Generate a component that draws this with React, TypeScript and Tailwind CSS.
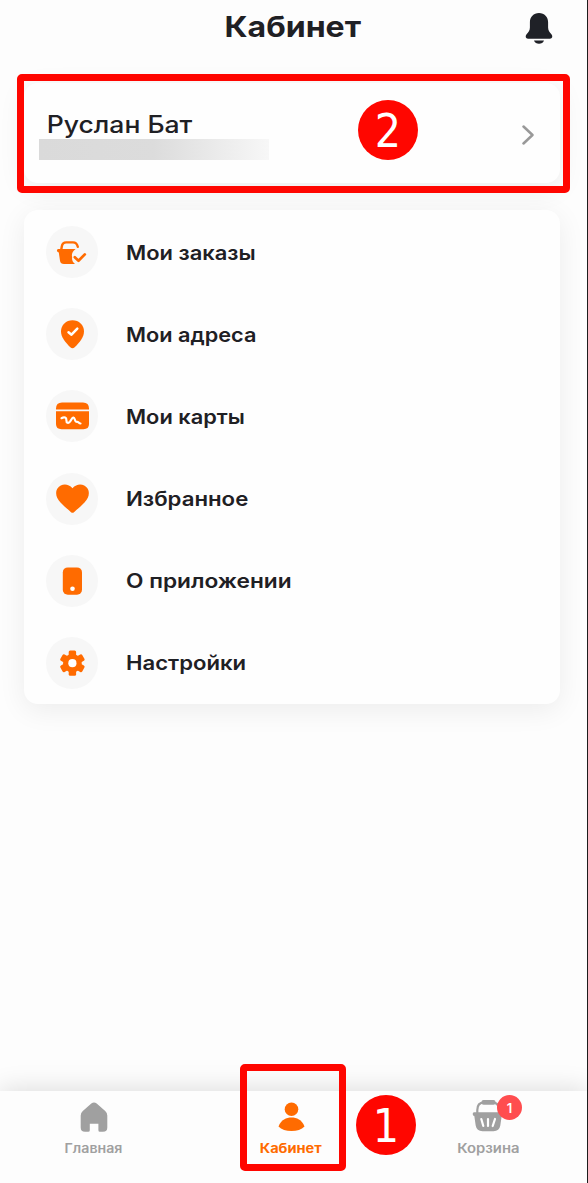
import type { ReactNode } from 'react'

const ORANGE = '#ff6b00'

function BellIcon() {
  return (
    <svg width="28" height="34" viewBox="0 0 28 34" fill="#1f2127">
      <path d="M14 1C8.600 1 4.900 5 4.900 10.200V15.500C4.900 18.600 3.400 20.400 1.600 22.300C0 24.200 .7 26.700 3 26.700H25C27.300 26.700 28 24.200 26.400 22.300C24.600 20.400 23.100 18.600 23.100 15.500V10.200C23.100 5 19.400 1 14 1Z" />
      <path d="M9 28.500H19C18.200 30.900 16.300 31.800 14 31.800S9.800 30.900 9 28.500Z" />
    </svg>
  )
}

function OrdersIcon() {
  return (
    <svg width="52" height="52" viewBox="0 0 52 52" fill="none">
      <path
        d="M15.200 24L15.800 20.500Q16.500 16.400 20.200 16.400H27Q30.700 16.400 31.800 20.800"
        stroke={ORANGE}
        strokeWidth="2.400"
        strokeLinecap="round"
      />
      <path
        d="M12.200 22.900H29.600C26.400 25.400 25.300 28.500 26.200 31.200C25.600 33.600 26.700 36.200 29 38H18Q14.500 38 14 34.700L12.800 26.500Q10.900 26.200 10.900 24.500Q10.900 22.900 12.200 22.900Z"
        fill={ORANGE}
      />
      <path
        d="M28.800 31.300L32.500 34.800L38.800 28.400"
        stroke={ORANGE}
        strokeWidth="2.700"
        strokeLinecap="round"
        strokeLinejoin="round"
      />
    </svg>
  )
}

function AddressIcon() {
  return (
    <svg width="52" height="52" viewBox="0 0 52 52" fill="none">
      <path
        d="M26.500 12.200C20.100 12.200 15 17 15 23.300C15 29.600 19.500 34.500 24.300 39.200Q26.500 41.200 28.700 39.200C33.500 34.500 38 29.600 38 23.300C38 17 32.900 12.200 26.500 12.200Z"
        fill={ORANGE}
      />
      <path
        d="M22.500 24.300L25.500 26.700L31.300 20.600"
        stroke="white"
        strokeWidth="2.500"
        strokeLinecap="round"
        strokeLinejoin="round"
      />
    </svg>
  )
}

function CardsIcon() {
  return (
    <svg width="52" height="52" viewBox="0 0 52 52" fill="none">
      <path d="M10 19.400V18.500Q10 12.400 16 12.400H37Q43 12.400 43 18.500V19.400Z" fill={ORANGE} />
      <path d="M10 21.300H43V34Q43 39.200 37.500 39.200H15.500Q10 39.200 10 34Z" fill={ORANGE} />
      <path
        d="M15.500 28.200C18.500 26.500 20.500 27.600 20.400 30.200C20.300 33 22.300 33.600 24 31.600C25.300 30 26 27.800 27.300 27.500C29.200 27.200 28.400 32.300 30.600 31.800C32.600 31.300 32.500 33.500 34.500 33.500"
        stroke="white"
        strokeWidth="2.200"
        strokeLinecap="round"
        strokeLinejoin="round"
      />
    </svg>
  )
}

function HeartIcon() {
  return (
    <svg width="52" height="52" viewBox="0 0 52 52" fill={ORANGE}>
      <path d="M26.500 15.200C31 10 38.200 10.600 41.400 15.300C44.300 19.700 42.600 25.200 38.500 29.400C35 33 31.500 36.100 28 39.200Q26.500 40.500 25 39.200C21.500 36.100 18 33 14.500 29.400C10.400 25.200 8.700 19.700 11.600 15.300C14.800 10.600 22 10 26.500 15.200Z" />
    </svg>
  )
}

function PhoneIcon() {
  return (
    <svg width="52" height="52" viewBox="0 0 52 52">
      <rect x="16.800" y="12.400" width="19.200" height="27.300" rx="5" fill={ORANGE} />
      <circle cx="26.500" cy="33.800" r="2.300" fill="white" />
    </svg>
  )
}

function SettingsIcon() {
  return (
    <svg width="52" height="52" viewBox="0 0 52 52">
      <g fill={ORANGE}>
        <circle cx="26.400" cy="26.200" r="9.300" />
        {[0, 60, 120].map((angle) => (
          <rect
            key={angle}
            x="22.700"
            y="13.600"
            width="7.400"
            height="25.200"
            rx="1.500"
            transform={`rotate(${angle} 26.400 26.200)`}
          />
        ))}
      </g>
      <circle cx="26.400" cy="26.200" r="4.100" fill="white" />
    </svg>
  )
}

function HomeIcon() {
  return (
    <svg width="28" height="30" viewBox="0 0 28 30" fill="#a0a0a0">
      <path d="M2.800 9L11.300 1.600Q14 -.4 16.700 1.600L25.200 9Q27.300 10.800 27.300 13.500V25.500Q27.300 29.800 23 29.800H20Q18.400 29.800 18.400 28.200V21.700H9.800V28.200Q9.800 29.800 8.200 29.800H5Q.7 29.800 .7 25.500V13.500Q.7 10.800 2.800 9Z" />
    </svg>
  )
}

function UserIcon() {
  return (
    <svg width="28" height="30" viewBox="0 0 28 30" fill={ORANGE}>
      <circle cx="14.500" cy="7.200" r="6.800" />
      <path d="M1.500 24.500C4.200 17.700 9.300 15.600 14.500 15.600S24.800 17.700 27.500 24.500C24.500 27.500 20 29 14.500 29S4.500 27.500 1.500 24.500Z" />
    </svg>
  )
}

function BasketIcon() {
  return (
    <svg width="32" height="33" viewBox="0 0 32 33" fill="none">
      <path
        d="M5.300 15V11Q5.300 3.500 12 3.300H20.500Q27 3.500 27 11V15"
        stroke="#a0a0a0"
        strokeWidth="2.200"
      />
      <rect x="9.500" y="1" width="14" height="4.800" rx="2" fill="#a0a0a0" />
      <path
        d="M2 13.200H30Q31.300 13.200 31.300 15Q31.300 17 29.700 17L28.300 26.500Q27.300 32.200 21.500 32.200H10.500Q4.700 32.200 3.700 26.500L2.300 17Q.7 17 .7 15Q.7 13.200 2 13.200Z"
        fill="#a0a0a0"
      />
      <path
        d="M9.300 20L11.300 27M16 20V27M23 20L20.700 27"
        stroke="white"
        strokeWidth="2.200"
        strokeLinecap="round"
      />
    </svg>
  )
}

interface MenuItem {
  label: string
  icon: ReactNode
  stretch: string
}

const MENU: MenuItem[] = [
  { label: 'Мои заказы', icon: <OrdersIcon />, stretch: 'scale-x-[1.095]' },
  { label: 'Мои адреса', icon: <AddressIcon />, stretch: 'scale-x-[1.085]' },
  { label: 'Мои карты', icon: <CardsIcon />, stretch: 'scale-x-[1.09]' },
  { label: 'Избранное', icon: <HeartIcon />, stretch: 'scale-x-[1.11]' },
  { label: 'О приложении', icon: <PhoneIcon />, stretch: 'scale-x-[1.135]' },
  { label: 'Настройки', icon: <SettingsIcon />, stretch: 'scale-x-[1.105]' },
]

function MenuRow({ label, icon, stretch }: MenuItem) {
  return (
    <li className="flex flex-1 items-center gap-7 pl-[22px]">
      <span className="size-[52px] shrink-0 rounded-full bg-[#f7f7f7]">{icon}</span>
      <span
        className={`origin-left pt-px text-[20px] leading-6 font-semibold whitespace-nowrap ${stretch}`}
      >
        {label}
      </span>
    </li>
  )
}

function StepMarker({ step, className }: { step: number; className: string }) {
  return (
    <div
      className={`absolute flex size-[60px] items-center justify-center rounded-full bg-[#ff0600] pt-0.5 font-['DejaVu_Sans_Condensed','DejaVu_Sans',sans-serif] text-[46px] leading-none text-white ${className}`}
    >
      {step}
    </div>
  )
}

export default function App() {
  return (
    <div className="relative flex h-[1183px] w-[588px] flex-col overflow-hidden border-r border-[#1d1d1d] bg-[#fdfdfd] font-[Inter,sans-serif] text-[#1f2024]">
      <header className="grid h-[83px] shrink-0 grid-cols-[1fr_auto_1fr] items-start pr-[35px] pl-[33px]">
        <h1 className="col-start-2 mt-[9px] scale-x-[1.105] text-[29px] leading-9 font-bold whitespace-nowrap">
          Кабинет
        </h1>
        <div className="mt-3 -mr-px justify-self-end">
          <BellIcon />
        </div>
      </header>

      <section className="mr-[27px] ml-6 flex h-[100px] shrink-0 items-center justify-between rounded-[14px] bg-[#fefefe] shadow-[0_6px_28px_rgba(0,0,0,0.07)]">
        <div className="mt-1 pl-[15px]">
          <p className="origin-left scale-x-[1.105] pl-[7px] text-[24px] leading-[29px] font-medium whitespace-nowrap">
            Руслан Бат
          </p>
          <div className="h-[21px] w-[230px] bg-linear-to-r from-[#dadada] via-[#dcdcdc] via-50% to-[#f7f7f7]" />
        </div>
        <svg width="12" height="20" viewBox="0 0 12 20" fill="none" className="mt-[3px] mr-[26px]">
          <path
            d="M1.500 1.500L10.500 10L1.500 18.500"
            stroke="#999999"
            strokeWidth="2.500"
            strokeLinecap="round"
            strokeLinejoin="round"
          />
        </svg>
      </section>

      <ul className="mt-[27px] mr-[27px] ml-6 flex h-[494px] shrink-0 flex-col rounded-[14px] bg-[#fefefe] pt-px shadow-[0_6px_28px_rgba(0,0,0,0.07)]">
        {MENU.map((item) => (
          <MenuRow key={item.label} {...item} />
        ))}
      </ul>

      <nav className="mt-auto flex h-[92px] shrink-0 gap-[87px] bg-[#fdfdfd] pt-[11px] pl-[39px] text-[13px] leading-4 font-semibold text-[#a0a0a0] shadow-[0_-2px_24px_rgba(0,0,0,0.13)]">
        <div className="flex w-[110px] flex-col items-center">
          <HomeIcon />
          <span className="mt-2 scale-x-[1.09]">Главная</span>
        </div>
        <div className="flex w-[110px] flex-col items-center text-[#ff6b00]">
          <UserIcon />
          <span className="mt-2 scale-x-[1.12] font-bold">Кабинет</span>
        </div>
        <div className="flex w-[110px] flex-col items-center">
          <div className="relative -mt-[3px]">
            <BasketIcon />
            <span className="absolute -top-1 -right-[18px] flex size-[25px] items-center justify-center rounded-full bg-[#ff4d4f] text-[13px] text-white">
              1
            </span>
          </div>
          <span className="mt-2 scale-x-[1.14]">Корзина</span>
        </div>
      </nav>

      <div className="absolute top-[74px] left-[17px] h-[119px] w-[553px] rounded-[5px] border-[7px] border-[#ff0600]" />
      <div className="absolute top-[1064px] left-[240px] h-[107px] w-[106px] rounded-[5px] border-[7px] border-[#ff0600]" />
      <StepMarker step={2} className="top-[100px] left-[358px]" />
      <StepMarker step={1} className="top-[1095px] left-[356px]" />
    </div>
  )
}
